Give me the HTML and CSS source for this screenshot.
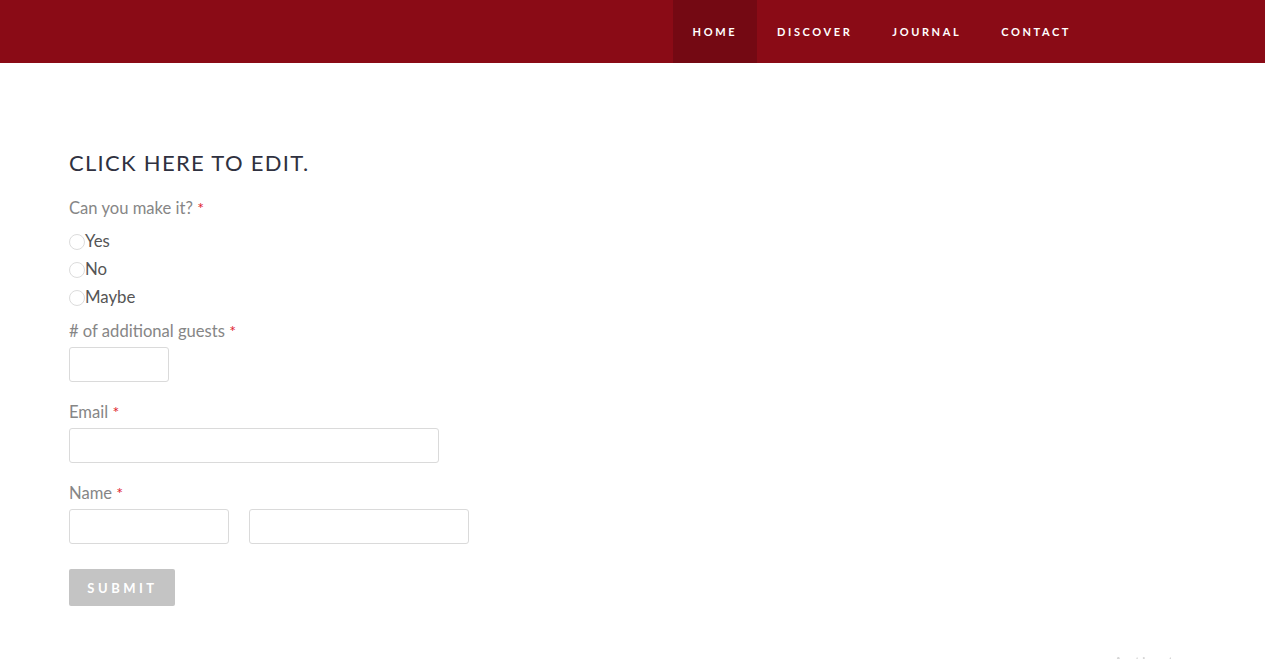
FILE: index.html
```html
<!doctype html>
<html>
<head>
    <title>RSVP</title>
    <meta charset="utf-8">
    <link rel="stylesheet" href="styles.css">
</head>
<body>
    <header class="topbar">
        <nav class="nav">
            <a class="nav-link active" href="#">Home</a>
            <a class="nav-link" href="#">Discover</a>
            <a class="nav-link" href="#">Journal</a>
            <a class="nav-link" href="#">Contact</a>
        </nav>
    </header>

    <section class="content">
        <h2 class="title">CLICK HERE TO EDIT.</h2>
        <form class="rsvp">
            <div class="field field-radio">
                <p class="label label-radio">Can you make it? <span class="req">*</span></p>
                <label class="radio"><input type="radio" name="go"><span>Yes</span></label>
                <label class="radio"><input type="radio" name="go"><span>No</span></label>
                <label class="radio"><input type="radio" name="go"><span>Maybe</span></label>
            </div>
            <div class="field">
                <p class="label"># of additional guests <span class="req">*</span></p>
                <input class="box guests" type="text">
            </div>
            <div class="field">
                <p class="label">Email <span class="req">*</span></p>
                <input class="box email" type="text">
            </div>
            <div class="field field-last">
                <p class="label">Name <span class="req">*</span></p>
                <div class="name-row">
                    <input class="box first" type="text">
                    <input class="box last" type="text">
                </div>
            </div>
            <button class="submit" type="button">Submit</button>
        </form>
    </section>

    <div class="watermark">Activate Windows</div>
</body>
</html>
```

FILE: styles.css
```css
* {
    margin: 0;
    padding: 0;
    box-sizing: border-box;
    font-family: Lato, 'Liberation Sans', sans-serif;
}

body {
    background: #ffffff;
    min-height: 100vh;
}

.topbar {
    background: #8a0b16;
    height: 63px;
    display: flex;
    justify-content: flex-end;
    padding-right: 174px;
}

.nav {
    display: flex;
}

.nav-link {
    display: flex;
    align-items: center;
    padding: 0 20px;
    height: 63px;
    color: #ffffff;
    text-decoration: none;
    text-transform: uppercase;
    font-size: 11px;
    font-weight: bold;
    letter-spacing: 2.6px;
}

.nav-link.active {
    background: #740913;
}

.content {
    padding: 85px 69px 0;
}

.title {
    font-size: 22px;
    font-weight: normal;
    letter-spacing: 1.3px;
    color: #2f3140;
    line-height: 30px;
    margin-bottom: 20px;
}

.field {
    margin-bottom: 20px;
}

.field-radio {
    margin-bottom: 11px;
}

.field-last {
    margin-bottom: 25px;
}

.label {
    color: #868686;
    font-size: 16.6px;
    line-height: 20px;
    margin-bottom: 6px;
}

.label-radio {
    margin-bottom: 8px;
}

.req {
    color: #e0232e;
    font-size: 16px;
}

.radio {
    display: flex;
    align-items: center;
    height: 28px;
    color: #555555;
    font-size: 16.8px;
}

.radio input {
    appearance: none;
    width: 16px;
    height: 16px;
    border: 1px solid #dcdcdc;
    border-radius: 50%;
    margin-top: 4px;
}

.box {
    display: block;
    height: 35px;
    border: 1px solid #dadada;
    border-radius: 3px;
    background: #ffffff;
}

.guests {
    width: 100px;
}

.email {
    width: 370px;
}

.name-row {
    display: flex;
    gap: 20px;
}

.first {
    width: 160px;
}

.last {
    width: 220px;
}

.submit {
    width: 106px;
    height: 37px;
    border: none;
    border-radius: 2px;
    background: #c4c4c4;
    color: #ffffff;
    text-transform: uppercase;
    font-size: 13px;
    font-weight: bold;
    letter-spacing: 3.5px;
    padding-left: 1px;
}

.watermark {
    position: fixed;
    left: 1112px;
    top: 650px;
    font-family: 'Segoe UI', 'Open Sans', sans-serif;
    font-size: 20px;
    color: #d6d6d6;
}
```
